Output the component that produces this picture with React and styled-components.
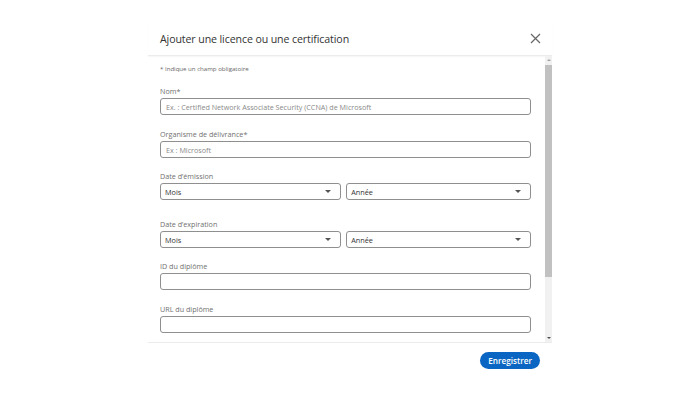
import React from "react";
import styled, { createGlobalStyle } from "styled-components";

const GlobalStyle = createGlobalStyle`
  html, body {
    margin: 0;
    padding: 0;
    background: #ffffff;
    font-family: "Open Sans", "Noto Sans", sans-serif;
  }
  * { box-sizing: border-box; }
`;

const Page = styled.div`
  width: 700px;
  height: 400px;
  display: flex;
  justify-content: center;
  padding-top: 22px;
`;

const Modal = styled.div`
  width: 404px;
  display: flex;
  flex-direction: column;
  background: #fff;
`;

const Header = styled.div`
  height: 34px;
  display: flex;
  align-items: center;
  justify-content: space-between;
  padding: 0 10px 0 12px;
  border-bottom: 1px solid #ececec;
  box-shadow: 0 1px 1px rgba(0, 0, 0, 0.03);
`;

const Title = styled.h2`
  margin: 0;
  font-size: 10.6px;
  font-weight: 400;
  color: #333;
  letter-spacing: -0.1px;
`;

const Close = styled.button`
  border: 0;
  background: none;
  padding: 0;
  width: 14px;
  height: 14px;
  display: flex;
  align-items: center;
  justify-content: center;
  cursor: pointer;
`;

const BodyWrap = styled.div`
  height: 286px;
  display: flex;
`;

const Body = styled.div`
  flex: 1;
  padding: 9px 14px 0 12px;
  display: flex;
  flex-direction: column;
`;

const Note = styled.p`
  margin: 0 0 13px;
  font-size: 6.1px;
  color: #666;
  line-height: 8px;
`;

const Field = styled.div`
  display: flex;
  flex-direction: column;
  margin-bottom: ${(p) => p.$gap}px;
`;

const Label = styled.label`
  font-size: 7.2px;
  color: #707070;
  line-height: 10px;
  margin-bottom: 2px;
`;

const Input = styled.div`
  height: 17px;
  border: 1px solid #8f8f8f;
  border-radius: 3px;
  display: flex;
  align-items: center;
  padding: 0 5px;
  font-size: 7.2px;
  color: #8a8a8a;
`;

const Row = styled.div`
  display: flex;
  gap: 5px;
`;

const Select = styled.div`
  flex: ${(p) => p.$flex};
  height: 17px;
  border: 1px solid #8f8f8f;
  border-radius: 3px;
  display: flex;
  align-items: center;
  justify-content: space-between;
  padding: 0 9px 0 4px;
  font-size: 7.3px;
  color: #333;
`;

const Caret = styled.span`
  width: 0;
  height: 0;
  border-left: 3.5px solid transparent;
  border-right: 3.5px solid transparent;
  border-top: 3.5px solid #555;
`;

const Scrollbar = styled.div`
  width: 7px;
  background: #f1f1f1;
  display: flex;
  flex-direction: column;
  align-items: center;
`;

const Arrow = styled.span`
  width: 0;
  height: 0;
  margin: ${(p) => (p.$up ? "3px 0 4px" : "auto 0 3px")};
  border-left: 2px solid transparent;
  border-right: 2px solid transparent;
  ${(p) => (p.$up ? "border-bottom: 2px solid #a3a3a3;" : "border-top: 2px solid #505050;")}
`;

const Thumb = styled.div`
  width: 7px;
  height: 212px;
  background: #c1c1c1;
`;

const Footer = styled.div`
  height: 36px;
  border-top: 1px solid #ececec;
  display: flex;
  align-items: center;
  justify-content: flex-end;
  padding-right: 12px;
`;

const SaveButton = styled.button`
  height: 17px;
  padding: 0 8px;
  border: 0;
  border-radius: 9px;
  background: #0a66c2;
  color: #fff;
  font-family: "Open Sans", sans-serif;
  font-weight: 600;
  font-size: 8.2px;
  cursor: pointer;
`;

const fields = [
  { label: "Nom*", placeholder: "Ex. : Certified Network Associate Security (CCNA) de Microsoft", gap: 14 },
  { label: "Organisme de délivrance*", placeholder: "Ex : Microsoft", gap: 13 },
];

export default function App() {
  return (
    <>
      <GlobalStyle />
      <Page>
        <Modal>
          <Header>
            <Title>Ajouter une licence ou une certification</Title>
            <Close aria-label="Fermer">
              <svg width="11" height="11" viewBox="0 0 11 11">
                <path d="M1 1L10 10M10 1L1 10" stroke="#666" strokeWidth="1.2" />
              </svg>
            </Close>
          </Header>
          <BodyWrap>
            <Body>
              <Note>* Indique un champ obligatoire</Note>
              {fields.map((f) => (
                <Field key={f.label} $gap={f.gap}>
                  <Label>{f.label}</Label>
                  <Input>{f.placeholder}</Input>
                </Field>
              ))}
              <Field $gap={19}>
                <Label>Date d’émission</Label>
                <Row>
                  <Select $flex={181}>Mois<Caret /></Select>
                  <Select $flex={185}>Année<Caret /></Select>
                </Row>
              </Field>
              <Field $gap={13}>
                <Label>Date d’expiration</Label>
                <Row>
                  <Select $flex={181}>Mois<Caret /></Select>
                  <Select $flex={185}>Année<Caret /></Select>
                </Row>
              </Field>
              <Field $gap={14}>
                <Label>ID du diplôme</Label>
                <Input />
              </Field>
              <Field $gap={0}>
                <Label>URL du diplôme</Label>
                <Input />
              </Field>
            </Body>
            <Scrollbar>
              <Arrow $up />
              <Thumb />
              <Arrow />
            </Scrollbar>
          </BodyWrap>
          <Footer>
            <SaveButton>Enregistrer</SaveButton>
          </Footer>
        </Modal>
      </Page>
    </>
  );
}
